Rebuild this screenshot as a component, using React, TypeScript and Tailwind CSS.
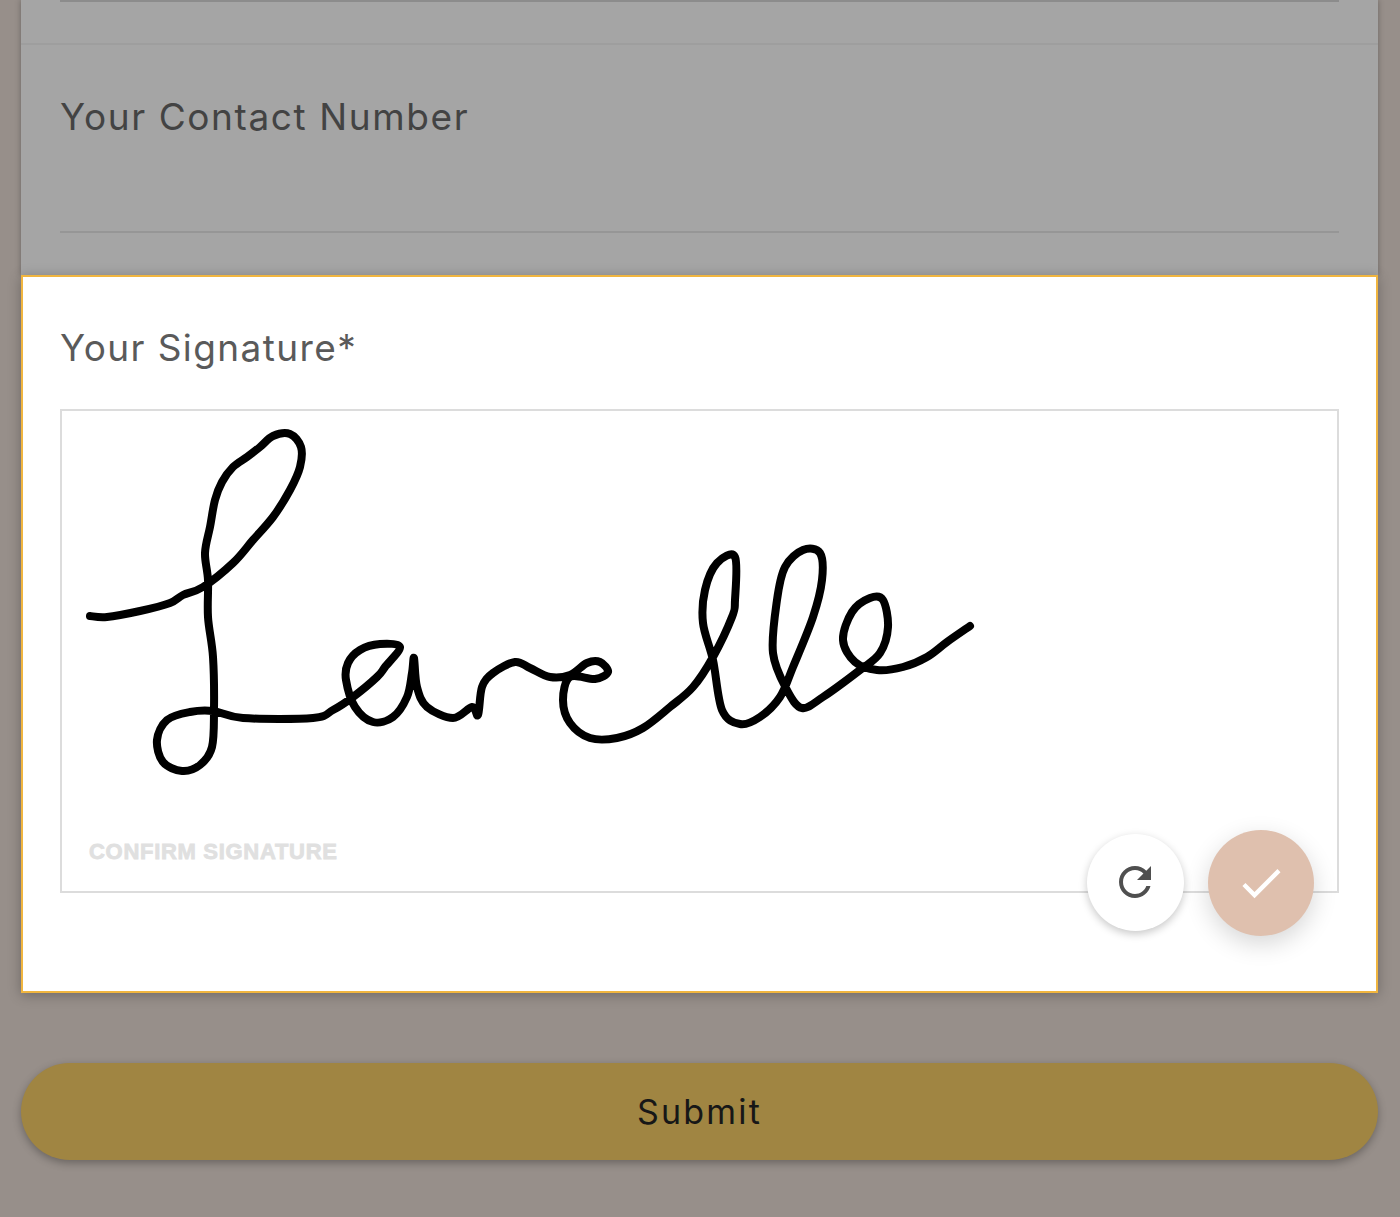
const signature: [number, number][] = [
  [90, 616], [107, 617], [140, 611], [170, 603], [183, 595], [203, 587], [233, 563], [253, 540], [273, 517], [290, 490],
  [300, 467], [301, 447], [290, 434], [273, 436], [260, 447], [247, 457], [233, 467], [222, 482], [215, 500], [210, 527], [205, 553],
  [208, 580], [208, 617], [213, 657], [214, 710], [212, 747], [200, 765], [182, 771], [163, 762], [157, 740], [167, 720],
  [190, 712], [213, 711], [243, 718], [313, 718], [333, 710], [353, 697], [377, 677], [385, 667], [400, 647], [380, 644],
  [360, 650], [348, 663], [346, 680], [355, 707], [373, 722], [393, 717], [407, 697], [412, 673], [414, 658], [417, 687], [427, 707], [453, 718],
  [472, 707], [478, 715], [482, 687], [493, 673], [515, 662], [530, 668], [550, 677], [570, 675], [587, 663], [600, 662],
  [608, 672], [595, 679], [570, 677], [563, 700], [570, 723], [590, 738], [617, 738], [643, 728], [670, 707], [693, 687],
  [713, 657], [732, 617], [735, 600], [735, 557], [717, 563], [705, 590], [703, 623], [713, 660], [722, 710], [740, 724],
  [760, 717], [780, 697], [793, 667], [813, 617], [822, 580], [820, 553], [803, 550], [785, 567], [777, 600], [773, 653],
  [787, 690], [802, 708], [823, 697], [860, 670], [880, 653], [888, 627], [883, 600], [870, 598], [852, 612], [843, 640],
  [855, 662], [877, 670], [903, 667], [927, 657], [947, 642], [970, 626],
];

// catmull-rom through the traced points so the stroke stays hand-drawn but smooth
function toPath(points: [number, number][]) {
  let d = `M${points[0][0]} ${points[0][1]}`;
  for (let i = 0; i < points.length - 1; i++) {
    const p0 = points[Math.max(i - 1, 0)];
    const p1 = points[i];
    const p2 = points[i + 1];
    const p3 = points[Math.min(i + 2, points.length - 1)];
    const c1x = p1[0] + (p2[0] - p0[0]) / 6;
    const c1y = p1[1] + (p2[1] - p0[1]) / 6;
    const c2x = p2[0] - (p3[0] - p1[0]) / 6;
    const c2y = p2[1] - (p3[1] - p1[1]) / 6;
    d += ` C${c1x.toFixed(1)} ${c1y.toFixed(1)} ${c2x.toFixed(1)} ${c2y.toFixed(1)} ${p2[0]} ${p2[1]}`;
  }
  return d;
}

const labelClass = "font-['Inter',sans-serif] text-[37px] leading-[44px]";

export default function App() {
  return (
    <div className="h-[1217px] overflow-hidden bg-[#978f8a] pr-[22px] pl-[21px]">
      <div className="bg-[#a5a5a5] shadow-[0_0_6px_rgba(0,0,0,0.3)]">
        <div className="h-[45px] border-b-2 border-[#9e9e9e] px-[39px]">
          <div className="h-[2px] bg-[#8c8c8c]" />
        </div>
        <div className="h-[230px] px-[39px] pt-[50px]">
          <p className={`${labelClass} tracking-[1.6px] text-[#434343]`}>Your Contact Number</p>
          <div className="mt-[92px] h-[2px] bg-[#969696]" />
        </div>
      </div>

      <div className="h-[718px] border-2 border-[#f0b53f] bg-white px-[37px] pt-[49px] shadow-[0_2px_12px_rgba(0,0,0,0.28)]">
        <p className={`${labelClass} tracking-[1.4px] text-[#5a5a5a]`}>Your Signature*</p>
        <div className="relative mt-[39px] h-[484px] border-2 border-[#dcdcdc] bg-white">
          <svg viewBox="62 411 1275 480" className="block h-[480px] w-[1275px]" fill="none">
            <path d={toPath(signature)} stroke="#000" strokeWidth="8" strokeLinecap="round" strokeLinejoin="round" />
          </svg>
          <span className="absolute bottom-[26px] left-[27px] font-['Liberation_Sans',sans-serif] text-[22px] leading-[26px] font-bold tracking-[0.7px] text-[#e0e0e0] [-webkit-text-stroke:0.8px_#e0e0e0]">
            CONFIRM SIGNATURE
          </span>
          <button className="absolute top-[423px] left-[1025px] flex size-[97px] items-center justify-center rounded-full bg-white shadow-[0_3px_8px_rgba(0,0,0,0.22)]">
            <svg viewBox="0 0 24 24" className="-mt-[1px] -ml-[1px] size-[48px]" fill="#4f4f4f">
              <path d="M17.65 6.35C16.2 4.9 14.21 4 12 4c-4.42 0-7.99 3.58-7.99 8s3.57 8 7.99 8c3.73 0 6.84-2.55 7.73-6h-2.08c-.82 2.33-3.04 4-5.65 4-3.31 0-6-2.69-6-6s2.69-6 6-6c1.66 0 3.14.69 4.22 1.78L13 11h7V4l-2.35 2.35z" />
            </svg>
          </button>
          <button className="absolute top-[419px] left-[1146px] flex size-[106px] items-center justify-center rounded-full bg-[#dfc0ae] shadow-[0_8px_24px_rgba(0,0,0,0.16)]">
            <svg viewBox="0 0 24 24" className="size-[52px]" fill="#fff">
              <path d="M9 16.17L4.83 12l-1.42 1.41L9 19 21 7l-1.41-1.41z" />
            </svg>
          </button>
        </div>
      </div>

      <button className="mt-[70px] flex h-[97px] w-full items-center justify-center rounded-full bg-[#a08542] font-['Inter',sans-serif] text-[34px] tracking-[2.2px] text-[#171717] shadow-[0_3px_8px_rgba(0,0,0,0.3)]">
        Submit
      </button>
    </div>
  );
}
